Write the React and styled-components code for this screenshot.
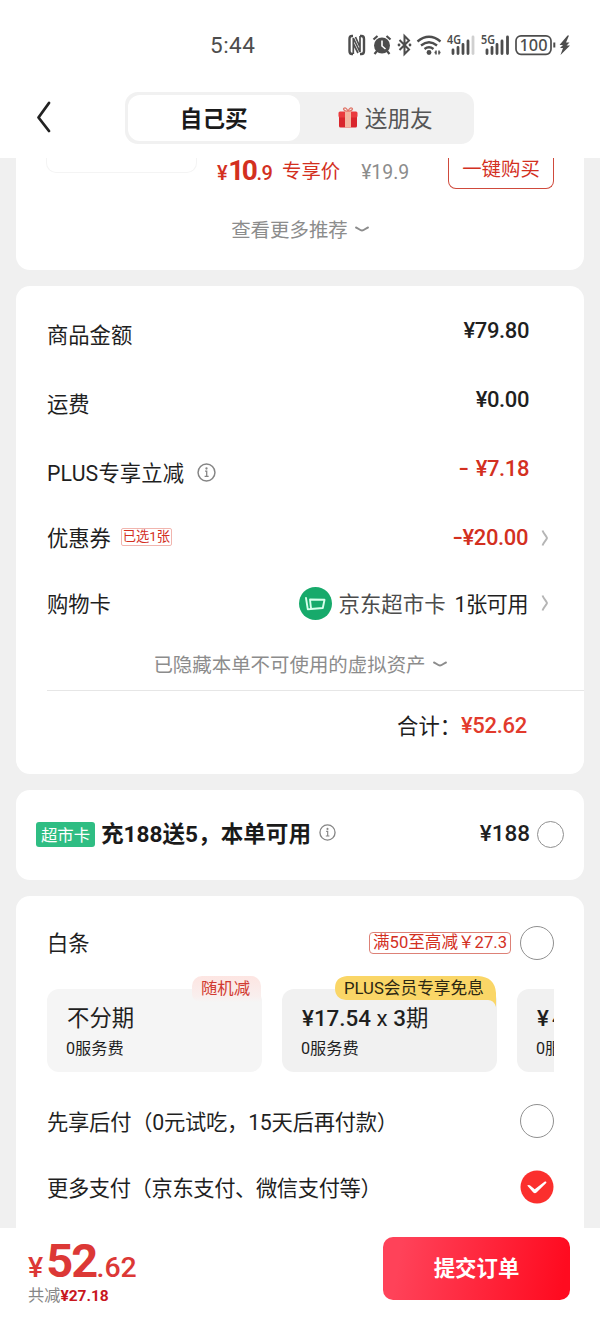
import React, { useState } from "react";
import styled, { createGlobalStyle, css } from "styled-components";

const GlobalStyle = createGlobalStyle`
  * {
    box-sizing: border-box;
  }
  body {
    margin: 0;
    background-color: #f0f0f0;
    font-family: Roboto, "Noto Sans CJK SC", sans-serif;
    color: #1f1f1f;
  }
  button {
    font-family: inherit;
    padding: 0;
    border: 0;
    background: none;
  }
`;

const Page = styled.div`
  display: flex;
  flex-direction: column;
  width: 600px;
  height: 1320px;
  overflow: hidden;
`;

/* header */
const Header = styled.header`
  flex: none;
  height: 158px;
  background-color: #fff;
`;
const StatusBar = styled.div`
  display: flex;
  align-items: center;
  height: 90px;
  padding-left: 210px;
  color: #4d4d4d;
`;
const Clock = styled.span`
  width: 138px;
  font-size: 22.5px;
  letter-spacing: 0.5px;
`;
const StatusIcons = styled.svg`
  display: block;
  overflow: visible;
  font-family: "Noto Sans", sans-serif;
`;
const NavBar = styled.nav`
  display: flex;
  align-items: center;
  height: 55px;
`;
const BackButton = styled.button`
  width: 125px;
  height: 40px;
  padding-left: 35px;
  text-align: left;
  svg {
    display: block;
  }
`;
const Tabs = styled.div`
  display: flex;
  width: 349px;
  height: 52px;
  padding: 3px;
  border-radius: 13px;
  background-color: #f1f1f1;
`;
const Tab = styled.button`
  display: flex;
  align-items: center;
  justify-content: center;
  gap: 7px;
  width: 172px;
  border-radius: 12px;
  font-size: 22.6px;
  color: #555;
  ${props =>
    props.$active &&
    css`
      background-color: #fff;
      color: #1a1a1a;
      font-weight: 700;
    `}
`;

/* body */
const Content = styled.main`
  flex: none;
  display: flex;
  flex-direction: column;
  gap: 16px;
  height: 1070px;
  padding: 0 16px;
  overflow: hidden;
`;
const Card = styled.section`
  flex: none;
  height: ${props => props.$height}px;
  border-radius: ${props => (props.$cut ? "0 0 14px 14px" : "14px")};
  background-color: #fff;
`;
const Offer = styled.div`
  display: flex;
  align-items: flex-start;
  height: 42px;
  padding: 0 30px;
`;
const Thumb = styled.div`
  width: 151px;
  height: 15px;
  border: 1px solid #f4f4f4;
  border-top: 0;
  border-radius: 0 0 10px 10px;
`;
const OfferPrice = styled.div`
  display: flex;
  align-items: baseline;
  width: 66px;
  margin-left: 20px;
  color: #d3301f;
  font-size: 20px;
  font-weight: 500;
  line-height: 26px;
  letter-spacing: -0.5px;
  b {
    margin-left: 1px;
    margin-right: 1px;
    font-size: 28px;
    letter-spacing: -2.4px;
    line-height: 25px;
  }
`;
const OfferText = styled.span`
  font-size: 19.4px;
  line-height: ${props => (props.$muted ? 30 : 28)}px;
  color: ${props => (props.$muted ? "#8c8c8c" : "#d3301f")};
  margin-left: ${props => (props.$muted ? "21px" : "-1px")};
`;
const BuyButton = styled.button`
  width: 106px;
  height: 31px;
  margin-left: auto;
  padding-bottom: 7px;
  border: 1.5px solid #cf4a3c;
  border-top: 0;
  border-radius: 0 0 8px 8px;
  font-size: 19.4px;
  line-height: 24px;
  color: #d3301f;
`;
const MoreLine = styled.div`
  display: flex;
  align-items: center;
  justify-content: center;
  gap: 7px;
  height: ${props => props.$height}px;
  font-size: 19.45px;
  color: #8c8c8c;
  svg {
    margin-top: 1px;
  }
`;

const Bill = styled.div`
  padding-top: 14px;
`;
const Row = styled.div`
  display: flex;
  align-items: center;
  height: ${props => props.$height}px;
  padding: 0 30px 0 31px;
  font-size: 21.3px;
  line-height: 32px;
`;
const Label = styled.span`
  padding-top: ${props => props.$drop || "2px"};
  white-space: nowrap;
  letter-spacing: ${props => props.$spacing || 0};
`;
const Amount = styled.div`
  display: flex;
  align-items: center;
  margin-left: auto;
  margin-bottom: ${props => (props.$raised ? "8px" : 0)};
  padding-right: ${props => (props.$link ? "2px" : "25px")};
  font-size: 22px;
  font-weight: 500;
  letter-spacing: -0.4px;
  color: ${props => (props.$red ? "#d3301f" : "#1f1f1f")};
`;
const Minus = styled.span`
  margin-right: ${props => props.$gap || "2px"};
  transform: scaleX(1.35);
`;
const CardName = styled.span`
  margin: 0 9px 0 7px;
  padding-top: 3px;
  font-size: 21.4px;
  font-weight: 400;
  letter-spacing: 0;
  color: #4c4c4c;
`;
const CardCount = styled.span`
  padding-top: 3px;
  font-size: 21.3px;
  font-weight: 400;
  letter-spacing: -0.6px;
`;
const Divider = styled.hr`
  height: 1px;
  margin: 0 0 0 31px;
  border: 0;
  background-color: #e6e6e6;
`;
const Total = styled.div`
  display: flex;
  align-items: center;
  justify-content: flex-end;
  height: 69px;
  padding-right: 57px;
  font-size: 21.3px;
  b {
    font-size: 22px;
    font-weight: 500;
    letter-spacing: -0.3px;
    color: #e23a2c;
  }
`;
const TotalLabel = styled.span`
  padding-bottom: 2px;
`;
const OutlineTag = styled.span`
  display: flex;
  align-items: center;
  justify-content: center;
  height: ${props => (props.$large ? 22 : 18)}px;
  width: ${props => (props.$large ? 142 : 51)}px;
  margin-left: ${props => (props.$large ? "auto" : "10px")};
  margin-bottom: ${props => (props.$large ? 0 : "2px")};
  border: 1px solid ${props => (props.$large ? "#dd8177" : "#f1b5ae")};
  border-radius: ${props => (props.$large ? 4 : 2)}px;
  font-size: ${props => (props.$large ? 16.6 : 13.3)}px;
  white-space: nowrap;
  color: #d3301f;
`;

const TopUp = styled.div`
  display: flex;
  align-items: center;
  height: 88px;
  padding: 0 20px;
`;
const GreenTag = styled.span`
  display: flex;
  align-items: center;
  justify-content: center;
  width: 59px;
  height: 25px;
  border-radius: 3px;
  background-color: #2fbd83;
  color: #fff;
  font-size: 16.4px;
`;
const TopUpTitle = styled.span`
  margin: 0 8px 4px 6px;
  font-size: 22.6px;
  font-weight: 700;
  white-space: nowrap;
  color: #1a1a1a;
`;
const TopUpPrice = styled.span`
  margin: 0 7px 3px auto;
  font-size: 22.5px;
  font-weight: 500;
`;
const Radio = styled.span`
  flex: none;
  width: ${props => props.$size}px;
  height: ${props => props.$size}px;
  margin-left: ${props => props.$gap || 0};
  border: 1.5px solid #909090;
  border-radius: 50%;
`;

const Plans = styled.div`
  display: flex;
  gap: 20px;
  width: 507px;
  margin-left: 31px;
  padding-top: 13px;
  overflow: hidden;
`;
const Plan = styled.div`
  position: relative;
  flex: none;
  width: 215px;
  height: 83px;
  padding: 13px 20px;
  border-radius: 12px;
  background-color: ${props => (props.$light ? "#f5f5f5" : "#f1f1f1")};
  strong {
    display: block;
    font-size: 22.4px;
    font-weight: ${props => (props.$light ? 400 : 500)};
    line-height: 32px;
    white-space: nowrap;
  }
  em {
    font-style: normal;
    font-weight: 400;
  }
  small {
    display: block;
    margin-left: -1px;
    font-size: 16.2px;
    line-height: 30px;
    white-space: nowrap;
  }
`;
const Yen = styled.span`
  margin-right: 3px;
`;
const RandomTag = styled.span`
  position: absolute;
  top: -13px;
  right: 1px;
  width: 69px;
  height: 26px;
  padding-right: 2px;
  border-radius: 10px 10px 0 8px;
  background: linear-gradient(#fde5e2, #f9efee 80%, #f5f5f5);
  font-size: 16.4px;
  line-height: 26px;
  text-align: center;
  color: #d13a31;
`;
const PlusTag = styled.span`
  position: absolute;
  top: -13px;
  right: 1px;
  width: 161px;
  height: 31px;
  padding-left: 9px;
  font-size: 16.7px;
  line-height: 26px;
  white-space: nowrap;
  color: #2b2712;
  isolation: isolate;
  svg {
    position: absolute;
    top: 0;
    left: 0;
    z-index: -1;
  }
`;
const PayRows = styled.div`
  padding-top: 16px;
`;
const PushRight = styled.span`
  display: flex;
  margin-left: auto;
`;

/* footer */
const Footer = styled.footer`
  flex: none;
  display: flex;
  justify-content: space-between;
  height: 92px;
  padding: 8px 30px 0 28px;
  background-color: #fff;
`;
const FooterPrice = styled.div`
  display: flex;
  align-items: baseline;
  height: 50px;
  color: #dc3836;
  font-size: 28.5px;
  font-weight: 500;
  line-height: 49px;
  b {
    margin-left: 3px;
    font-size: 47px;
    line-height: 49px;
    letter-spacing: -1.8px;
  }
`;
const Saved = styled.div`
  display: flex;
  font-size: 16.2px;
  line-height: 20px;
  color: #858585;
  b {
    font-size: 15.5px;
    color: #c8161d;
  }
`;
const SubmitButton = styled.button`
  width: 187px;
  height: 63px;
  margin-top: 1px;
  padding-bottom: 4px;
  border-radius: 10px;
  background: linear-gradient(100deg, #ff4259 10%, #ff0b20 95%);
  color: #fff;
  font-size: 21.4px;
  font-weight: 700;
`;

const IconSlot = styled.svg`
  flex: none;
  display: block;
  margin-left: ${props => props.$left || 0}px;
  margin-bottom: ${props => props.$lift || 0}px;
`;

const InfoIcon = ({ size, left, lift }) => (
  <IconSlot $left={left} $lift={lift} width={size} height={size} viewBox="0 0 18 18" fill="none" stroke="#858585">
    <circle cx="9" cy="9" r="8" strokeWidth="1.4" />
    <path d="M7.6 7.8h1.6v5M7.2 12.7h3.8" strokeWidth="1.2" />
    <circle cx="9" cy="5.2" r="1.1" fill="#858585" stroke="none" />
  </IconSlot>
);

const DownIcon = () => (
  <IconSlot width="14" height="7" viewBox="0 0 14 7" fill="none" stroke="#8c8c8c" strokeWidth="1.9">
    <path d="M1 1.5c2.5 1 4 3 6 3s3.500-2 6-3" strokeLinecap="round" />
  </IconSlot>
);

const RightIcon = () => (
  <IconSlot $left={13} width="11" height="18" viewBox="0 0 11 18" fill="none" stroke="#b5b5b5" strokeWidth="1.9">
    <path d="M1.500 1.500c1 3 4 5.500 4.500 7.500-.5 2-3.500 4.500-4.500 7.500" />
  </IconSlot>
);

const GiftIcon = () => (
  <IconSlot width="20" height="21" viewBox="0 0 20 21">
    <path d="M10 4.500C7 4 4.500 2.500 6 1.200S9.500 2.500 10 4.500C10.500 2.500 12.500 0 14 1.200S13 4 10 4.500Z" fill="none" stroke="#e0786b" strokeWidth="1.300" />
    <rect x="1" y="8" width="18" height="12.500" rx="1.500" fill="#d9252c" />
    <rect x=".5" y="4.500" width="19" height="6" rx="1.500" fill="#ea3a3d" />
    <rect x="7" y="4.500" width="6" height="16" fill="#f3b5a0" />
  </IconSlot>
);

const CartIcon = () => (
  <IconSlot width="33" height="33" viewBox="0 0 33 33">
    <circle cx="16.500" cy="16.500" r="16.500" fill="#17aa6b" />
    <path d="M7 11l1.800 11.300 15-1.300 1.700-8.300-14.500-.2 1 9" fill="none" stroke="#d8ffec" strokeWidth="1.900" strokeLinejoin="round" strokeLinecap="round" />
  </IconSlot>
);

const CheckedIcon = () => (
  <IconSlot width="34" height="34" viewBox="0 0 34 34">
    <circle cx="17" cy="17" r="16.500" fill="#fb2f2d" />
    <path d="M7.200 15.600c1.300-.9 2.400-.6 3.300.2l4.200 3.400 9.800-7.500c1.200-.7 2.400.1 1.700 1.400l-9.700 9.300c-1 1-2.200 1-3.200 0z" fill="#fff" />
  </IconSlot>
);

const StatusGlyphs = () => (
  <StatusIcons width="224" height="22" viewBox="0 0 224 22" fill="none" stroke="#4d4d4d">
    {/* nfc */}
    <path d="M5 2H4Q1.500 2 1.500 5v12q0 3 2.500 3h1M12 2h1.500q2.500 0 2.500 3v12q0 3-2.500 3H12" strokeWidth="2.400" />
    <path d="M5.300 20V4l6.700 14V2M7.500 3l4 9M5.500 10l4.500 9" strokeWidth="1.700" />
    {/* alarm */}
    <circle cx="34" cy="11.500" r="8" fill="#4d4d4d" stroke="none" />
    <path d="M25.500 5.500l4-3.500M42.500 5.500l-4-3.500M29 17l-2.500 3M39 17l2.500 3" strokeWidth="2.200" />
    <path d="M34 6.500v5.500l3.500 3" stroke="#fff" strokeWidth="1.600" />
    {/* bluetooth */}
    <path d="M51.500 6l9.500 9.500-4.500 4.500V2l4.500 4.500-9.500 9.500" strokeWidth="2" />
    <circle cx="51" cy="11" r="1.400" fill="#4d4d4d" stroke="none" />
    <circle cx="62" cy="11" r="1.400" fill="#4d4d4d" stroke="none" />
    {/* wifi */}
    <path d="M69.500 7.500q11.500-9.500 23 0M73 11.500q8-6.500 16 0M76.500 15q4.500-3.500 9 0" strokeWidth="2.300" />
    <circle cx="81" cy="18.500" r="2.400" fill="#4d4d4d" stroke="none" />
    <path d="M88 16.500v4M91 16.500v4M86.500 18.500h1.500M91 18.500h1.500" strokeWidth="1.500" />
    {/* signals */}
    <path d="M105 16v3.500M110 13.500v6M115 10.500v9M120 7v12.500" strokeWidth="2.800" strokeLinecap="round" />
    <path d="M125 3v16.500" stroke="#d0d0d0" strokeWidth="2.800" strokeLinecap="round" />
    <path d="M139 16v3.500M144 13.500v6M149 10.500v9M154 7v12.500M159.500 3v16.500" strokeWidth="2.800" strokeLinecap="round" />
    <text x="99" y="9.800" fontSize="12" fontWeight="600" fill="#4d4d4d" stroke="none" textLength="14" lengthAdjust="spacingAndGlyphs">4G</text>
    <text x="133" y="9.800" fontSize="12" fontWeight="600" fill="#4d4d4d" stroke="none" textLength="14" lengthAdjust="spacingAndGlyphs">5G</text>
    {/* battery */}
    <rect x="168" y="1.800" width="35" height="18.500" rx="5" strokeWidth="1.700" />
    <path d="M206.300 8.500v5" strokeWidth="2" />
    <text x="171.500" y="17" fontSize="17" fontWeight="500" fill="#4d4d4d" stroke="none" textLength="28" lengthAdjust="spacingAndGlyphs">100</text>
    <path d="M219.500 1.500l-8 9.500h3.500l-3 3h3l-2.500 7 9.500-9.500h-3.500l3-3h-3.500l3-7z" fill="#4d4d4d" stroke="none" />
  </StatusIcons>
);

const App = () => {
  const [tab, setTab] = useState("self");

  return (
    <Page>
      <GlobalStyle />
      <Header>
        <StatusBar>
          <Clock>5:44</Clock>
          <StatusGlyphs />
        </StatusBar>
        <NavBar>
          <BackButton>
            <svg width="18" height="40" viewBox="0 0 18 40" fill="none" stroke="#222" strokeWidth="2.8">
              <path d="M14 5L3.500 19.500 14 33" strokeLinecap="round" strokeLinejoin="round" />
            </svg>
          </BackButton>
          <Tabs>
            <Tab $active={tab === "self"} onClick={() => setTab("self")}>
              自己买
            </Tab>
            <Tab $active={tab === "friend"} onClick={() => setTab("friend")}>
              <GiftIcon />
              送朋友
            </Tab>
          </Tabs>
        </NavBar>
      </Header>

      <Content>
        <Card $height={112} $cut>
          <Offer>
            <Thumb />
            <OfferPrice>
              ¥<b>10</b>.9
            </OfferPrice>
            <OfferText>专享价</OfferText>
            <OfferText $muted>¥19.9</OfferText>
            <BuyButton>一键购买</BuyButton>
          </Offer>
          <MoreLine $height={57}>
            查看更多推荐
            <DownIcon />
          </MoreLine>
        </Card>

        <Card $height={488}>
          <Bill>
            <Row $height={69}>
              <Label>商品金额</Label>
              <Amount $raised>¥79.80</Amount>
            </Row>
            <Row $height={69}>
              <Label>运费</Label>
              <Amount $raised>¥0.00</Amount>
            </Row>
            <Row $height={69}>
              <Label $spacing="0.15px">PLUS专享立减</Label>
              <InfoIcon size={19} left={13} />
              <Amount $raised $red>
                <Minus $gap="9px">-</Minus>¥7.18
              </Amount>
            </Row>
            <Row $height={62}>
              <Label>优惠券</Label>
              <OutlineTag>已选1张</OutlineTag>
              <Amount $link $red>
                <Minus>-</Minus>¥20.00
                <RightIcon />
              </Amount>
            </Row>
            <Row $height={68}>
              <Label $drop="3px">购物卡</Label>
              <Amount $link>
                <CartIcon />
                <CardName>京东超市卡</CardName>
                <CardCount>1张可用</CardCount>
                <RightIcon />
              </Amount>
            </Row>
            <MoreLine $height={53}>
              已隐藏本单不可使用的虚拟资产
              <DownIcon />
            </MoreLine>
            <Divider />
            <Total>
              <TotalLabel>合计：</TotalLabel>
              <b>¥52.62</b>
            </Total>
          </Bill>
        </Card>

        <Card $height={90}>
          <TopUp>
            <GreenTag>超市卡</GreenTag>
            <TopUpTitle>充188送5，本单可用</TopUpTitle>
            <InfoIcon size={17} lift={3} />
            <TopUpPrice>¥188</TopUpPrice>
            <Radio $size={27} />
          </TopUp>
        </Card>

        <Card $height={350}>
          <Bill>
            <Row $height={66}>
              <Label>白条</Label>
              <OutlineTag $large>满50至高减￥27.3</OutlineTag>
              <Radio $size={34} $gap="9px" />
            </Row>
            <Plans>
              <Plan $light>
                <RandomTag>随机减</RandomTag>
                <strong>不分期</strong>
                <small>0服务费</small>
              </Plan>
              <Plan>
                <PlusTag>
                  <svg width="161" height="31" viewBox="0 0 161 31">
                    <path d="M12 0h131q17 1 18 17v14q-2-7-8-7H11Q0 23 0 12T12 0z" fill="#fad667" />
                  </svg>
                  PLUS会员专享免息
                </PlusTag>
                <strong>
                  ¥17.54 <em>x</em> 3<em>期</em>
                </strong>
                <small>0服务费</small>
              </Plan>
              <Plan>
                <strong>
                  <Yen>¥</Yen>4.38 x 12期
                </strong>
                <small>0服务费</small>
              </Plan>
            </Plans>
            <PayRows>
              <Row $height={66}>
                <Label $drop="4px" $spacing="-0.25px">
                  先享后付（0元试吃，15天后再付款）
                </Label>
                <Radio $size={34} $gap="auto" />
              </Row>
              <Row $height={66}>
                <Label $drop="4px" $spacing="-0.4px">
                  更多支付（京东支付、微信支付等）
                </Label>
                <PushRight>
                  <CheckedIcon />
                </PushRight>
              </Row>
            </PayRows>
          </Bill>
        </Card>
      </Content>

      <Footer>
        <div>
          <FooterPrice>
            ¥<b>52</b>.62
          </FooterPrice>
          <Saved>
            共减<b>¥27.18</b>
          </Saved>
        </div>
        <SubmitButton>提交订单</SubmitButton>
      </Footer>
    </Page>
  );
};

export default App;
